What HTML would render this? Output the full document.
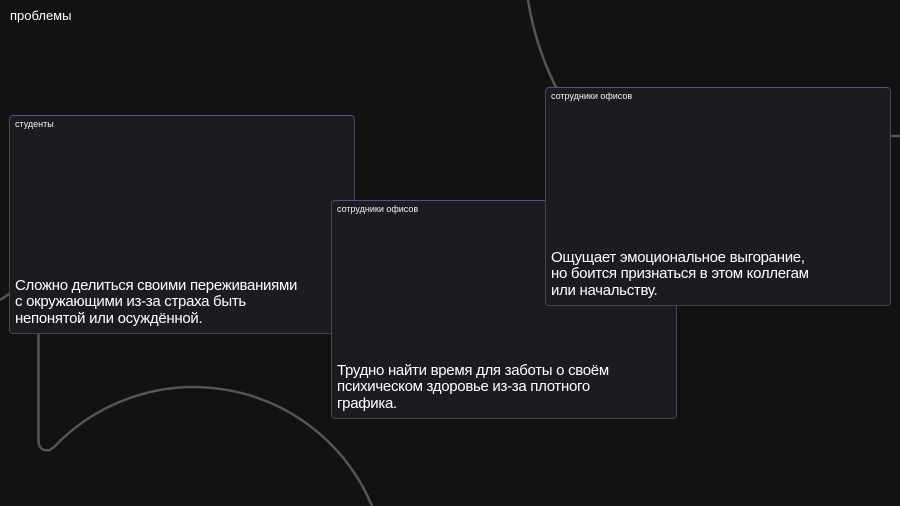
<!DOCTYPE html>
<html><head><meta charset="utf-8"><style>
*{margin:0;padding:0;box-sizing:border-box}
body{width:900px;height:506px;background:#121212;overflow:hidden;position:relative;font-family:"Liberation Sans",sans-serif;color:#fff}
svg{position:absolute;left:0;top:0}
.t{position:absolute;left:10px;top:8px;font-size:13px}
.c{position:absolute;width:346px;height:219px;border-radius:4px;background:#1b1c20;border:1px solid;border-color:#5b4d8c #4a4656 #45454a #4a4656;}
.l{position:absolute;left:5px;top:3px;font-size:9px;color:#f2f2f2}
.b{position:absolute;left:5px;bottom:6px;font-size:15px;line-height:16.5px;letter-spacing:-0.3px;color:#fff}
</style></head><body>
<svg width="900" height="506"><g fill="none" stroke="#555" stroke-width="2.5">
<path d="M528 0 A300 300 0 0 0 560 95"/>
<path d="M0 300 L15 290"/>
<path d="M38.5 330 L38.5 442 Q40 452 50 450 L54 447 A193 193 0 0 1 372 506"/>
<path d="M885 136 L900 136"/>
</g></svg>
<div class="t">проблемы</div>
<div class="c" style="left:9px;top:115px"><div class="l">студенты</div><div class="b">Сложно делиться своими переживаниями<br>с окружающими из-за страха быть<br>непонятой или осуждённой.</div></div>
<div class="c" style="left:331px;top:200px"><div class="l">сотрудники офисов</div><div class="b">Трудно найти время для заботы о своём<br>психическом здоровье из-за плотного<br>графика.</div></div>
<div class="c" style="left:545px;top:87px"><div class="l">сотрудники офисов</div><div class="b">Ощущает эмоциональное выгорание,<br>но боится признаться в этом коллегам<br>или начальству.</div></div>
</body></html>
